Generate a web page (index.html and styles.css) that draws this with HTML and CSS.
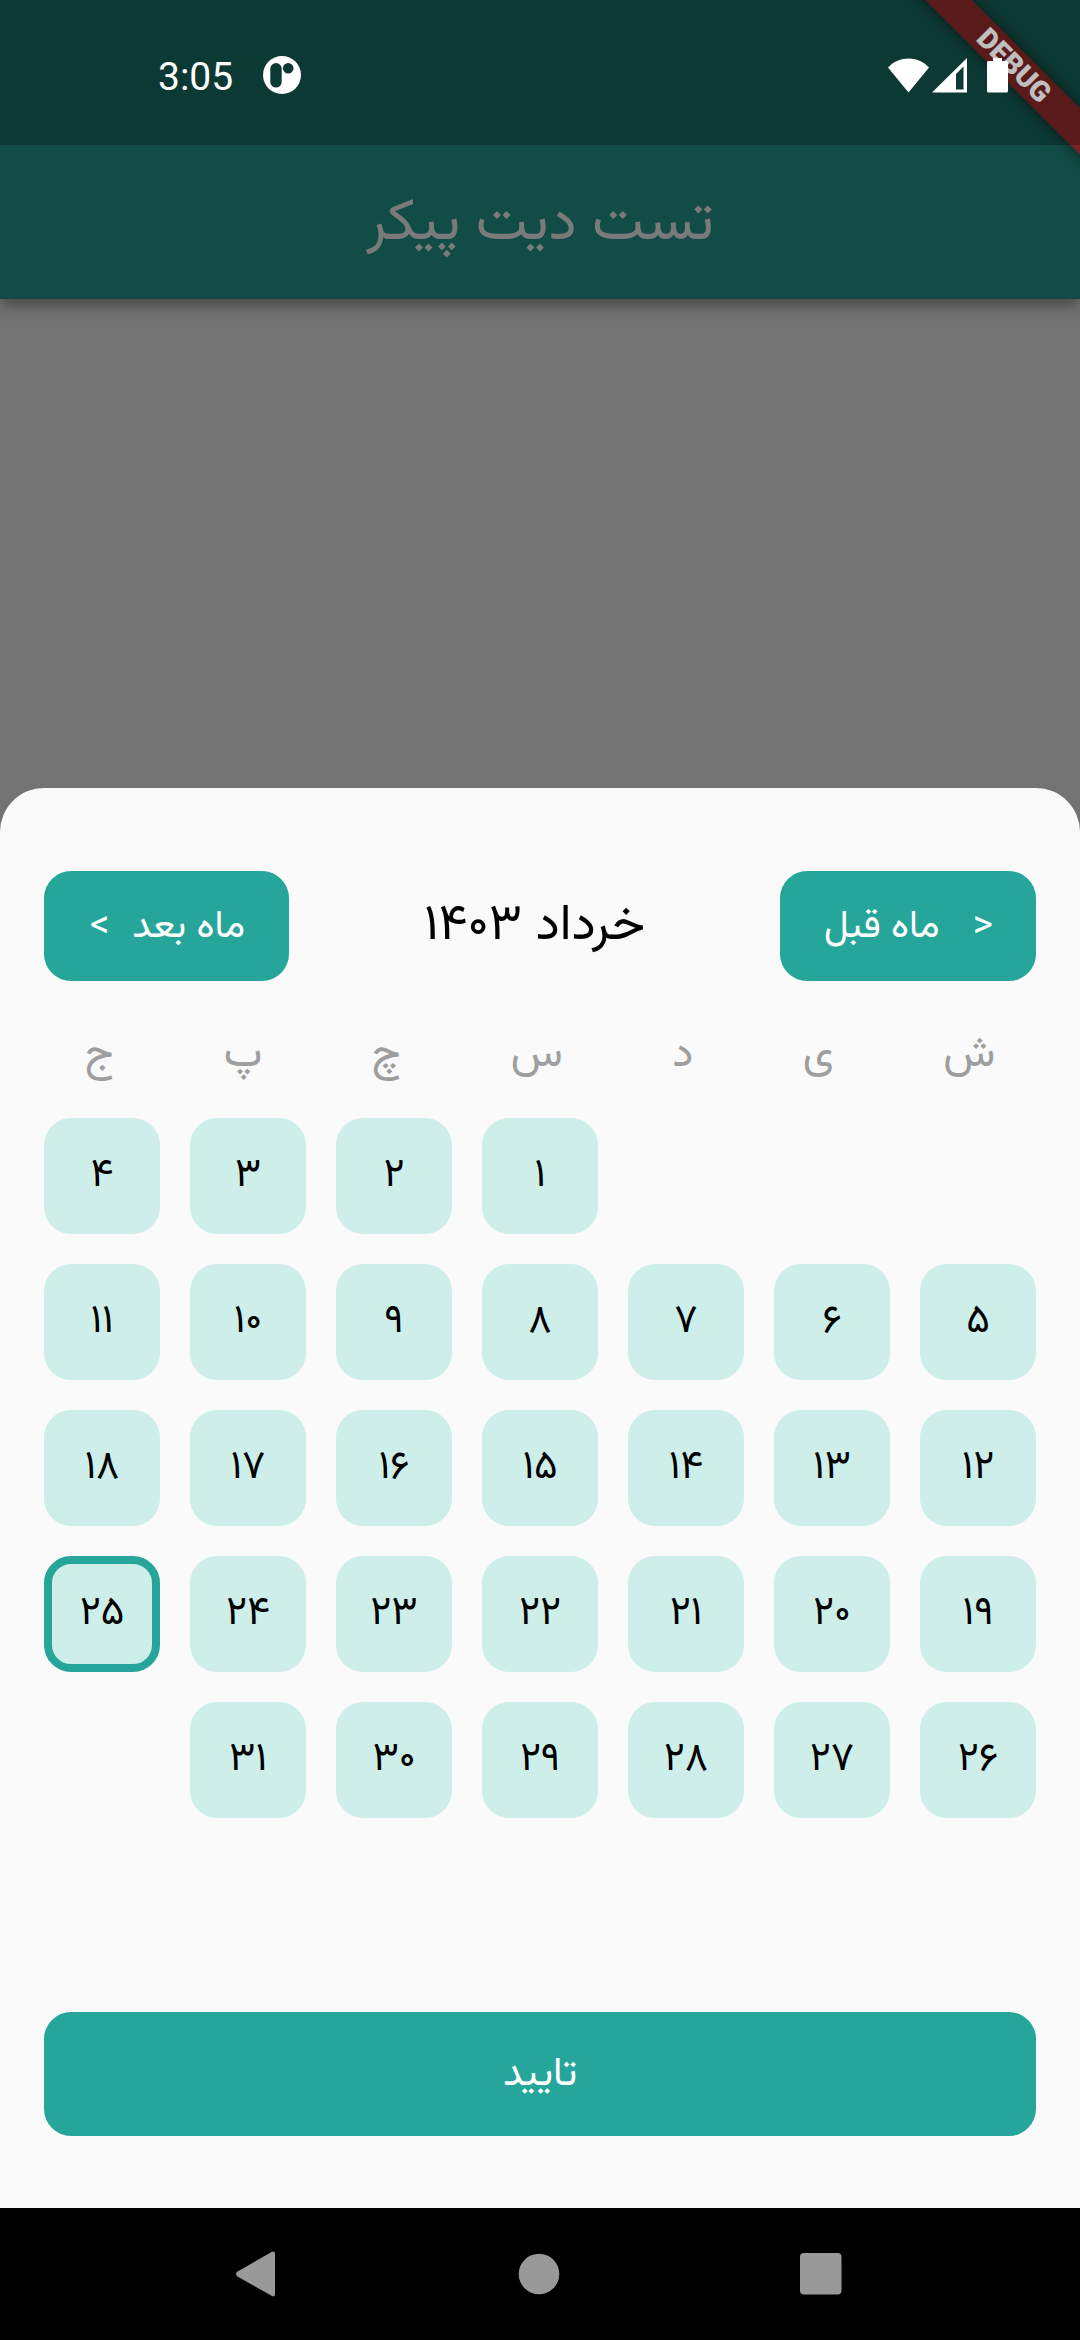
FILE: index.html
```html
<!DOCTYPE html>
<html lang="fa">
<head>
<meta charset="utf-8">
<title>تست دیت پیکر</title>
<link rel="stylesheet" href="styles.css">
</head>
<body>
<div class="screen">
  <div class="app">
    <div class="appbar"><h1 class="appbar-title">تست دیت پیکر</h1></div>
  </div>
  <div class="banner"><span>DEBUG</span></div>
  <header class="status">
    <div class="status-left">
      <span class="time">3:05</span>
      <svg width="38" height="38" viewBox="0 0 38 38"><circle cx="19" cy="19" r="19" fill="#fff"/><rect x="7.3" y="7" width="11.4" height="24.6" rx="5.7" fill="#0d3834"/><circle cx="25.2" cy="12.3" r="5.3" fill="#0d3834"/></svg>
    </div>
    <svg class="status-icons" width="122" height="36" viewBox="887 57 122 36" fill="#fff"><path d="M888 67.5C899 55.5 918 55.5 929 67.5L908.5 92.500Z"/><path fill-rule="evenodd" d="M932 92.500L967 58V92.500ZM956 74V89.500H963.500V66.500Z"/><path d="M993 58h9v3h4.500a1.500 1.500 0 0 1 1.500 1.500v28.500a1.500 1.500 0 0 1-1.500 1.500h-18a1.500 1.500 0 0 1-1.500-1.500v-28.500a1.500 1.500 0 0 1 1.500-1.500h4.500z"/></svg>
  </header>
  <main class="sheet">
    <div class="month-nav">
      <button class="btn prev"><span class="arrow">&lt;</span><span>ماه قبل</span></button>
      <h2 class="month">خرداد <span class="year">۱۴۰۳</span></h2>
      <button class="btn next"><span>ماه بعد</span><span class="arrow">&gt;</span></button>
    </div>
    <div class="weekdays"><span>ش</span><span>ی</span><span>د</span><span>س</span><span>چ</span><span>پ</span><span>ج</span></div>
    <div class="days">
      <span class="day first">۱</span><span class="day">۲</span><span class="day">۳</span><span class="day">۴</span>
      <span class="day">۵</span><span class="day">۶</span><span class="day">۷</span><span class="day">۸</span><span class="day">۹</span><span class="day">۱۰</span><span class="day">۱۱</span>
      <span class="day">۱۲</span><span class="day">۱۳</span><span class="day">۱۴</span><span class="day">۱۵</span><span class="day">۱۶</span><span class="day">۱۷</span><span class="day">۱۸</span>
      <span class="day">۱۹</span><span class="day">۲۰</span><span class="day">۲۱</span><span class="day">۲۲</span><span class="day">۲۳</span><span class="day">۲۴</span><span class="day selected">۲۵</span>
      <span class="day">۲۶</span><span class="day">۲۷</span><span class="day">۲۸</span><span class="day">۲۹</span><span class="day">۳۰</span><span class="day">۳۱</span>
    </div>
    <button class="btn confirm">تایید</button>
  </main>
  <nav class="navbar">
    <svg width="42" height="46" viewBox="0 0 42 46" fill="#999"><path d="M37 .8Q40 -.5 40 3V43Q40 46.500 37 45L2.500 25.500Q-.5 23 2.500 20.500Z"/></svg>
    <svg width="42" height="42" viewBox="0 0 42 42" fill="#999"><circle cx="21" cy="21" r="20.300"/></svg>
    <svg width="42" height="42" viewBox="0 0 42 42" fill="#999"><rect width="41.500" height="41.500" rx="4"/></svg>
  </nav>
</div>
</body>
</html>
```
FILE: styles.css
```css
* { box-sizing: border-box; margin: 0; padding: 0; }
body { width: 1080px; height: 2340px; overflow: hidden; font-family: "Vazirmatn", "Noto Sans Arabic", Roboto, sans-serif; }
.screen { position: relative; width: 1080px; height: 2340px; display: flex; flex-direction: column; direction: rtl; background: #737373; overflow: hidden; }
.app { height: 788px; flex: none; }
.appbar { height: 299px; padding-top: 151px; display: flex; justify-content: center; align-items: center; background: #124c46; box-shadow: 0 6px 15px rgba(0, 0, 0, .4); }
.appbar-title { font-size: 58.5px; font-weight: 400; line-height: 80px; color: #7a7a7a; }
/* Layers over the app bar: debug ribbon, then the tinted status bar */
.banner { position: absolute; left: 814px; top: 49px; width: 400px; height: 33px; transform: rotate(45deg); background: #7a2323; box-shadow: 0 0 16px rgba(0, 0, 0, .5); display: flex; justify-content: center; align-items: center; }
.banner span { font: 900 28.5px/33px Roboto, sans-serif; color: #fff; direction: ltr; }
.status { position: absolute; left: 0; top: 0; width: 1080px; height: 145px; padding: 56px 71px 0 158px; display: flex; justify-content: space-between; direction: ltr; background: rgba(0, 0, 0, .25); }
.status-left { display: flex; gap: 30px; height: 38px; align-items: center; }
.time { font: 400 39px/46px Roboto, sans-serif; color: #fff; padding-top: 4px; }
.status-icons { margin-top: 1px; }
.sheet { height: 1420px; flex: none; background: #fafafa; border-radius: 44px 44px 0 0; padding: 83px 44px 0; display: flex; flex-direction: column; }
.month-nav { display: flex; justify-content: space-between; align-items: center; height: 110px; }
.btn { border: 0; border-radius: 27px; background: #26a69a; color: #fff; font-family: inherit; font-size: 38.5px; font-weight: 400; display: flex; align-items: center; justify-content: space-between; }
.prev { width: 256px; height: 110px; padding: 4px 43px 0 44px; }
.next { width: 245px; height: 110px; padding: 4px 44px 0 46px; }
.month { font-size: 50.5px; font-weight: 400; color: #000; }
.year { letter-spacing: 1.3px; }
.weekdays { display: flex; justify-content: space-around; height: 77px; margin: 36px -14px 0; font-size: 44px; line-height: 77px; color: #9e9e9e; }
.days { display: grid; grid-template-columns: repeat(7, 116px); grid-auto-rows: 116px; gap: 30px; margin-top: 24px; }
.day { display: flex; justify-content: center; align-items: center; border-radius: 27px; background: #cdeee9; font-size: 40px; letter-spacing: .8px; color: #000; }
.first { grid-column: 4; }
.selected { border: 8px solid #26a69a; }
.confirm { height: 124px; margin-top: 194px; padding-top: 1px; justify-content: center; flex: none; font-size: 40.5px; }
.navbar { height: 132px; flex: none; background: #000; display: flex; direction: ltr; justify-content: space-between; align-items: center; padding: 0 238px 0 235px; }
```
